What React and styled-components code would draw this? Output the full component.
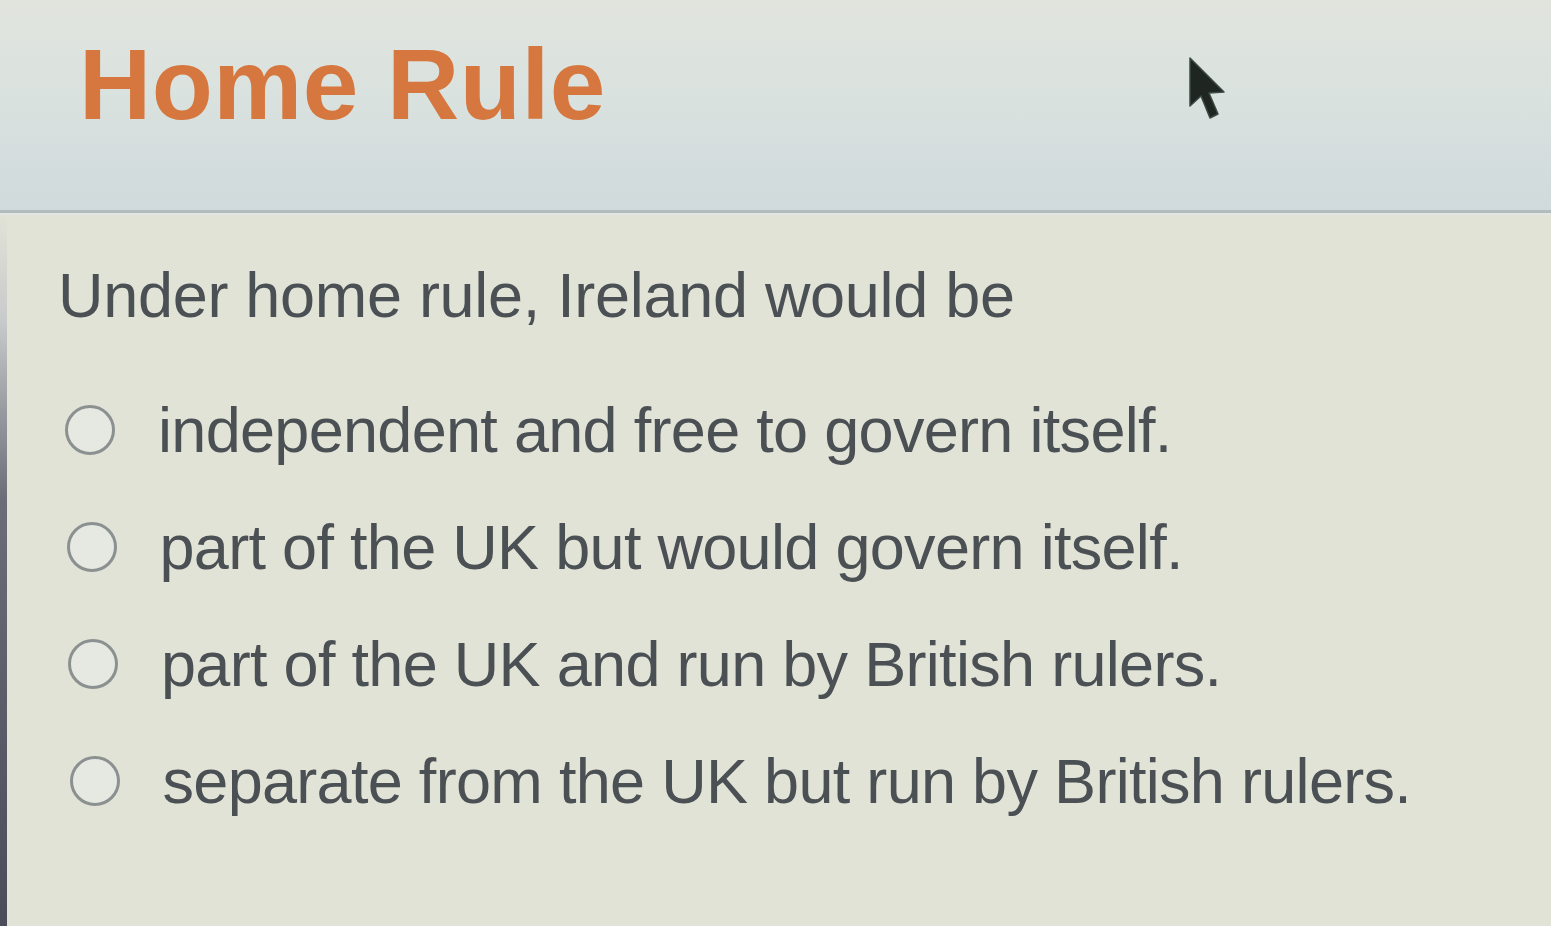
import React from 'react';
import styled, {createGlobalStyle} from 'styled-components';

const GlobalStyle = createGlobalStyle`
    html, body {
        margin: 0;
        padding: 0;
        background: #e2e3d7;
        overflow: hidden;
    }
    body {
        font-family: "Liberation Sans", Arial, sans-serif;
    }
`;

const options = [
    'independent and free to govern itself.',
    'part of the UK but would govern itself.',
    'part of the UK and run by British rulers.',
    'separate from the UK but run by British rulers.',
];

const App = () => {
    return <Page>
        <GlobalStyle/>
        <Header>
            <Title>Home Rule</Title>
            <Pointer>
                <svg width="44" height="70" viewBox="0 0 44 70">
                    <path d="M4 4 L4 52 L15 42 L24 64 L32 60 L23 39 L38 38 Z" fill="#1f2622" stroke="#3d4a44" strokeWidth="1.5" strokeLinejoin="round"/>
                </svg>
            </Pointer>
        </Header>
        <Body>
            <Edge/>
            <Content>
                <Question>Under home rule, Ireland would be</Question>
                <OptionList>
                    {options.map((text, i) => <Option key={i} shift={i}>
                        <Radio/>
                        <OptionText>{text}</OptionText>
                    </Option>)}
                </OptionList>
            </Content>
        </Body>
    </Page>
}

const Page = styled.div`
    width: 1551px;
    height: 926px;
    display: flex;
    flex-direction: column;
    background: #e2e3d7;
`;

const Header = styled.div`
    position: relative;
    height: 213px;
    box-sizing: border-box;
    padding: 29px 0 0 79px;
    background: linear-gradient(180deg, #e1e4dd 0%, #dae2df 45%, #d0dadc 100%);
    border-bottom: 3px solid #b3bcbc;
    box-shadow: 0 2px 0 #dfe6e4;
`;

const Title = styled.h1`
    margin: 0;
    font-size: 100px;
    font-weight: 700;
    line-height: 110px;
    color: #d5773f;
    letter-spacing: 0.5px;
`;

const Pointer = styled.div`
    position: absolute;
    left: 1186px;
    top: 54px;
`;

const Body = styled.div`
    flex: 1;
    display: flex;
`;

const Edge = styled.div`
    width: 7px;
    background: linear-gradient(180deg, #e2e3d7 0%, #c9cacb 15%, #6c6d78 40%, #4b4c5a 100%);
`;

const Content = styled.div`
    flex: 1;
    padding: 42px 0 0 51px;
`;

const Question = styled.div`
    font-size: 63px;
    line-height: 80px;
    color: #4a5053;
    letter-spacing: -0.3px;
`;

const OptionList = styled.div`
    display: flex;
    flex-direction: column;
    gap: 37px;
    margin-top: 55px;
`;

const Option = styled.div`
    display: flex;
    align-items: center;
    height: 80px;
    padding-left: ${p => 7 + p.shift * 1.5}px;
`;

const Radio = styled.span`
    width: 50px;
    height: 50px;
    box-sizing: border-box;
    border-radius: 50%;
    border: 3px solid #8b9090;
    background: #e6e8e2;
    flex-shrink: 0;
`;

const OptionText = styled.span`
    margin-left: 43px;
    font-size: 63px;
    line-height: 80px;
    color: #4a5053;
    letter-spacing: -0.7px;
`;

export default App;
